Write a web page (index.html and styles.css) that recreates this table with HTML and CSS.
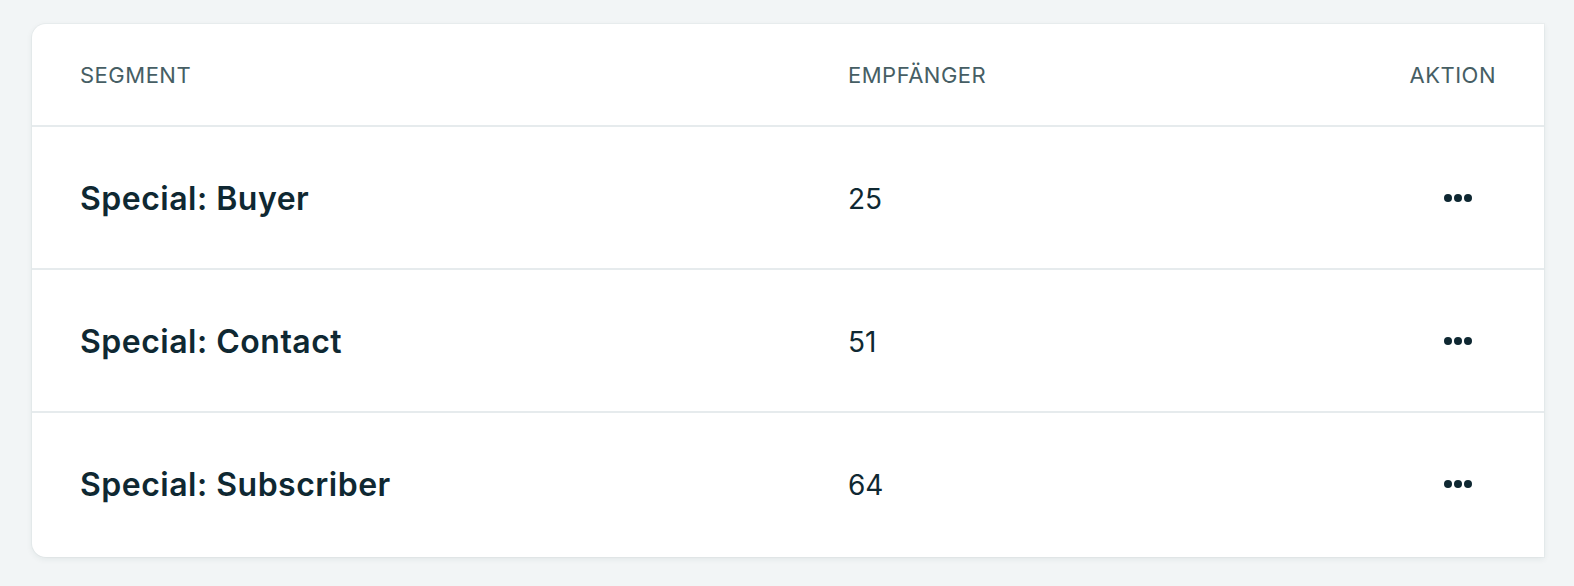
FILE: index.html
```html
<!DOCTYPE html>
<html>
<head>
  <title>Segmente</title>
  <link rel="stylesheet" href="styles.css">
</head>
<body>
  <div class="panel">
    <div class="card">
      <div class="row head">
        <div class="cell">Segment</div>
        <div class="cell">Empfänger</div>
        <div class="cell action">Aktion</div>
      </div>
      <div class="row">
        <div class="cell name">Special: Buyer</div>
        <div class="cell count">25</div>
        <div class="cell action"><button class="more" title="Mehr"><span></span><span></span><span></span></button></div>
      </div>
      <div class="row">
        <div class="cell name">Special: Contact</div>
        <div class="cell count">51</div>
        <div class="cell action"><button class="more" title="Mehr"><span></span><span></span><span></span></button></div>
      </div>
      <div class="row">
        <div class="cell name">Special: Subscriber</div>
        <div class="cell count">64</div>
        <div class="cell action"><button class="more" title="Mehr"><span></span><span></span><span></span></button></div>
      </div>
    </div>
  </div>
</body>
</html>
```

FILE: styles.css
```css
body {
  margin: 0;
  background-color: #f2f5f6;
  font-family: Inter, "Open Sans", sans-serif;
  color: #0f2832;
}

.panel {
  padding: 24px 30px 29px 32px;
}

.card {
  padding-bottom: 3px;
  background-color: #fff;
  border-radius: 14px 0 0 14px;
  box-shadow: 0 2px 6px rgba(30, 60, 70, 0.08), 0 0 0 1px rgba(30, 60, 70, 0.03);
}

.row {
  display: grid;
  grid-template-columns: 768px 1fr 90px;
  align-items: center;
  height: 141px;
  padding: 0 48px;
  border-top: 2px solid #e6ebed;
}

.row.head {
  height: 101px;
  border-top: none;
  font-size: 22px;
  text-transform: uppercase;
  letter-spacing: 0.5px;
  color: #465e64;
}

.cell.action {
  display: flex;
  justify-content: flex-end;
}

.name {
  padding-top: 2px;
  font-size: 32px;
  font-weight: 600;
  letter-spacing: 0.5px;
}

.count {
  padding-top: 2px;
  font-size: 28px;
}

.more {
  display: flex;
  gap: 2px;
  justify-content: center;
  align-items: center;
  width: 60px;
  height: 40px;
  margin-right: 8px;
  padding: 0;
  border: none;
  background: none;
  cursor: pointer;
}

.more span {
  width: 8px;
  height: 8px;
  border-radius: 50%;
  background-color: #0f2832;
}
```
